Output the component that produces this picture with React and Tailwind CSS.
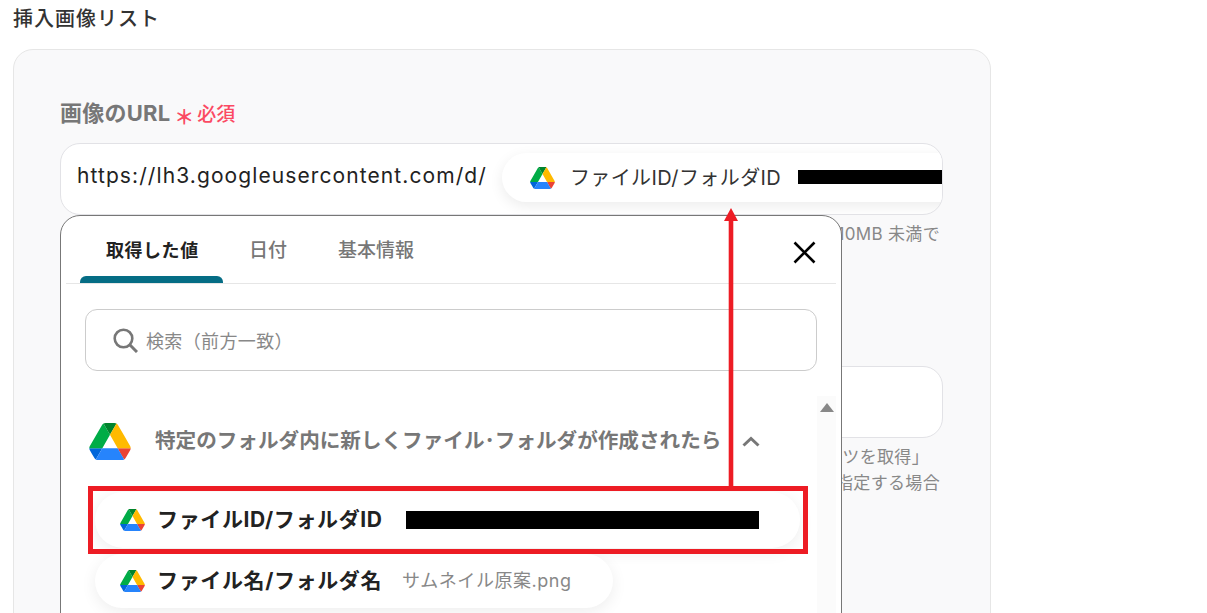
import React from "react";

const font = { fontFamily: 'Inter, "Noto Sans CJK JP", sans-serif' };

const DriveIcon = ({ className }) => (
  <svg viewBox="0 0 87.3 78" className={className}>
    <path d="m6.6 66.85 3.85 6.65c.8 1.4 1.95 2.5 3.3 3.3l13.75-23.8h-27.5c0 1.55.4 3.1 1.2 4.5z" fill="#0066da" />
    <path d="m43.65 25-13.75-23.8c-1.35.8-2.5 1.9-3.3 3.3l-25.4 44a9.06 9.06 0 0 0 -1.2 4.5h27.5z" fill="#00ac47" />
    <path d="m73.55 76.8c1.35-.8 2.5-1.9 3.3-3.3l1.6-2.75 7.65-13.25c.8-1.4 1.2-2.95 1.2-4.5h-27.502l5.852 11.5z" fill="#ea4335" />
    <path d="m43.65 25 13.75-23.8c-1.35-.8-2.9-1.2-4.5-1.2h-18.5c-1.6 0-3.15.45-4.5 1.2z" fill="#00832d" />
    <path d="m59.8 53h-32.3l-13.75 23.8c1.35.8 2.9 1.2 4.5 1.2h50.8c1.6 0 3.15-.45 4.5-1.2z" fill="#2684fc" />
    <path d="m73.4 26.5-12.7-22c-.8-1.4-1.95-2.5-3.3-3.3l-13.75 23.8 16.15 28h27.45c0-1.55-.4-3.1-1.2-4.5z" fill="#ffba00" />
  </svg>
);

const App = () => {
  return (
    <div className="relative h-[613px] overflow-hidden bg-white pl-[13px]" style={font}>
      <h1 className="h-[38px] text-[20px] leading-[39px] font-medium tracking-[0.05em] text-[#333]">挿入画像リスト</h1>

      {/* Form card behind the popup */}
      <div className="mt-[11px] h-[700px] w-[978px] rounded-[20px] border border-[#e6e6e6] bg-[#f9f9fa] pt-[48px] pr-[47px] pl-[46px]">
        <div className="flex h-[32px] items-center">
          <span className="-translate-y-[1px] text-[22px] font-bold tracking-[0.01em] text-[#777]">画像のURL</span>
          <span className="ml-[4px] translate-y-[4px] text-[20px] leading-[32px] font-bold text-[#fb4a63]">＊</span>
          <span className="ml-[3px] translate-y-[1px] text-[19px] font-medium text-[#fb4a63]">必須</span>
        </div>
        <div className="mt-[13px] flex h-[72px] items-center overflow-hidden rounded-[20px] border border-[#e2e2e6] bg-white pl-[16px]">
          <span className="mb-[6px] shrink-0 text-[21px] tracking-[0.052em] whitespace-nowrap text-[#222]">https://lh3.googleusercontent.com/d/</span>
          <div className="mb-[3px] ml-[15px] flex h-[49px] w-[520px] shrink-0 items-center rounded-full bg-white pl-[28px] shadow-[0_4px_14px_rgba(0,0,0,0.08)]">
            <DriveIcon className="h-[22px] w-[25px] shrink-0" />
            <span className="ml-[15px] shrink-0 text-[20px] tracking-[0.02em] whitespace-nowrap text-[#333]">ファイルID/フォルダID</span>
            <div className="mb-[2px] ml-[17px] h-[14px] w-[144px] shrink-0 bg-black" />
          </div>
        </div>
        <p className="mt-[7px] h-[24px] pr-[3px] text-right text-[17px] leading-[24px] tracking-[0.02em] text-[#888]">ファイルサイズは 10MB 未満で</p>

        <div className="mt-[120px] h-[72px] rounded-[20px] border border-[#e2e2e6] bg-white" />
        <p className="mt-[6px] pr-[14px] text-right text-[17px] leading-[26px] tracking-[0.02em] text-[#888]">コンテンツを取得」</p>
        <p className="pr-[3px] text-right text-[17px] leading-[26px] tracking-[0.02em] text-[#888]">を指定する場合</p>
      </div>

      {/* Popup */}
      <div className="absolute top-[215px] left-[60px] h-[420px] w-[782px] rounded-t-[20px] border border-[#777] bg-white">
        <div className="mx-[5px] flex h-[68px] border-b border-[#e6e6e6]">
          <div className="ml-[14px] flex w-[143px] flex-col">
            <span className="pt-[21px] pl-[26px] text-[18px] leading-[28px] font-bold tracking-[0.03em] whitespace-nowrap text-[#222]">取得した値</span>
            <div className="mt-auto h-[7px] rounded-t-[6px] bg-[#056d85]" />
          </div>
          <span className="px-[26px] pt-[21px] text-[19px] leading-[28px] font-medium text-[#777]">日付</span>
          <span className="px-[25px] pt-[21px] text-[19px] leading-[28px] font-medium text-[#777]">基本情報</span>
          <svg viewBox="0 0 23 23" className="mt-[25px] mr-[20px] ml-auto h-[23px] w-[23px]">
            <path d="M1.5 1.5 21.5 21.5M21.5 1.5 1.5 21.5" stroke="#000" strokeWidth="2.6" fill="none" />
          </svg>
        </div>

        <div className="mx-[24px] mt-[25px] flex h-[62px] items-center rounded-[12px] border border-[#ccc] pl-[27px]">
          <svg viewBox="0 0 25 25" className="h-[25px] w-[25px] shrink-0">
            <circle cx="10.5" cy="10.5" r="8.8" stroke="#777" strokeWidth="2.6" fill="none" />
            <path d="M17 17 24 24" stroke="#777" strokeWidth="3" fill="none" />
          </svg>
          <span className="mt-[3px] ml-[8px] text-[18px] tracking-[0.02em] text-[#888]">検索（前方一致）</span>
        </div>

        <div className="mt-[25px] flex">
          <div className="w-[756px]">
            <div className="flex h-[90px] items-center pl-[28px]">
              <DriveIcon className="h-[37px] w-[42px] shrink-0" />
              <span className="ml-[24px] text-[20.6px] font-bold whitespace-nowrap text-[#777]">特定のフォルダ内に新しくファイル･フォルダが作成されたら</span>
              <svg viewBox="0 0 18 11" className="ml-[21px] h-[11px] w-[18px] shrink-0">
                <path d="M1.5 9.5 9 2.5 16.5 9.5" stroke="#777" strokeWidth="3" fill="none" />
              </svg>
            </div>
            <div className="mt-[6px] ml-[34px] flex h-[56px] w-[705px] items-center rounded-full bg-white pl-[25px] shadow-[0_4px_16px_rgba(0,0,0,0.07)]">
              <DriveIcon className="h-[22px] w-[25px] shrink-0" />
              <span className="ml-[12px] text-[21px] font-bold tracking-[0.03em] whitespace-nowrap text-[#222]">ファイルID/フォルダID</span>
              <div className="ml-[23px] h-[18px] w-[353px] bg-black" />
            </div>
            <div className="mt-[6px] ml-[34px] flex h-[54px] w-[518px] items-center rounded-full bg-white pl-[25px] shadow-[0_4px_16px_rgba(0,0,0,0.07)]">
              <DriveIcon className="h-[22px] w-[25px] shrink-0" />
              <span className="ml-[12px] text-[21px] font-bold tracking-[0.03em] whitespace-nowrap text-[#222]">ファイル名/フォルダ名</span>
              <span className="mb-[1px] ml-[20px] text-[18px] tracking-[0.03em] whitespace-nowrap text-[#888]">サムネイル原案.png</span>
            </div>
          </div>
          <div className="flex h-[240px] w-[19px] justify-center bg-[#fbfbfb] pt-[7px]">
            <svg viewBox="0 0 14 9" className="h-[9px] w-[14px]">
              <path d="M7 0 14 9H0z" fill="#888" />
            </svg>
          </div>
        </div>
      </div>

      {/* Annotation: red arrow and box */}
      <svg viewBox="0 0 14 282" className="absolute top-[208px] left-[723.5px] h-[282px] w-[14px]">
        <path d="M7 0 14 13H9.3V282H4.7V13H0z" fill="#ed1c24" />
      </svg>
      <div className="absolute top-[486px] left-[88px] h-[68px] w-[720px] border-[5px] border-[#ed1c24]" />
    </div>
  );
};

export default App;
